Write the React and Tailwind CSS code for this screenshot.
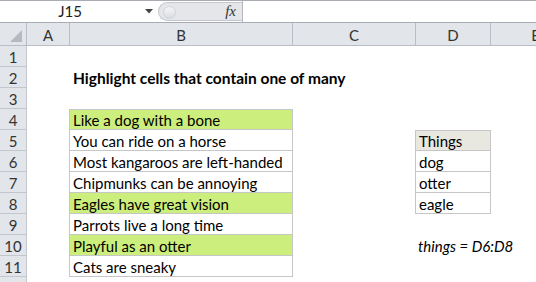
import React from 'react';

const cols = [43, 223, 123, 75, 90];
const letters = ['A', 'B', 'C', 'D', 'E'];

const rows = [
  { n: 1 },
  { n: 2, title: 'Highlight cells that contain one of many' },
  { n: 3 },
  { n: 4, b: 'Like a dog with a bone', green: true, first: true },
  { n: 5, b: 'You can ride on a horse', d: 'Things', dHead: true },
  { n: 6, b: 'Most kangaroos are left-handed', d: 'dog' },
  { n: 7, b: 'Chipmunks can be annoying', d: 'otter' },
  { n: 8, b: 'Eagles have great vision', green: true, d: 'eagle' },
  { n: 9, b: 'Parrots live a long time' },
  { n: 10, b: 'Playful as an otter', green: true, note: 'things = D6:D8' },
  { n: 11, b: 'Cats are sneaky' },
  { n: '' },
];

const FormulaBar = () => (
  <div className="flex h-[23px] border-t border-b border-[#a8acb2] bg-white">
    <div className="w-[140px] flex items-center justify-center text-[15px] text-[#222]">J15</div>
    <div className="w-[18px] flex items-center justify-center">
      <svg width="8" height="5" viewBox="0 0 8 5">
        <polygon points="0,0 8,0 4,4.5" fill="#444" />
      </svg>
    </div>
    <div className="w-[84px] relative flex items-center justify-end pr-[6px] bg-[#e4e6e9] border border-r-0 border-[#c4c8cd] rounded-l-[11px] my-[1px]">
      <div className="absolute left-[4px] top-[3px] w-[13px] h-[13px] rounded-full bg-gradient-to-b from-[#f4f5f6] to-[#dadde0] border border-[#d0d3d7]" />
      <span className="italic text-[15px] text-[#333]" style={{ fontFamily: '"Liberation Serif", serif' }}>
        fx
      </span>
    </div>
    <div className="w-px bg-[#b4b8be]" />
    <div className="flex-1 bg-white" />
  </div>
);

const HeaderRow = () => (
  <div className="flex h-[23px] bg-[#e2e5e9] border-b border-[#b9bec6] overflow-hidden">
    <div className="w-[27px] shrink-0 border-r border-[#b9bec6] flex items-end justify-end pr-[4px] pb-[3px]">
      <svg width="12" height="12" viewBox="0 0 12 12">
        <polygon points="12,0 12,12 0,12" fill="#b6bac0" />
      </svg>
    </div>
    {cols.map((w, i) => (
      <div
        key={letters[i]}
        style={{ width: w }}
        className="shrink-0 border-r border-[#b9bec6] flex items-center justify-center pt-[3px] text-[15px] text-[#333]"
      >
        {letters[i]}
      </div>
    ))}
  </div>
);

const Row = ({ r }) => {
  const bordered = !!r.b;
  return (
    <div className="flex h-[21px]">
      <div className="w-[27px] shrink-0 bg-[#e2e5e9] border-r border-b border-[#c3c7cd] flex items-center justify-center pt-[2px] text-[15px] text-[#333]">
        {r.n}
      </div>
      <div className="w-[43px] shrink-0" />
      <div className="w-[223px] shrink-0 relative">
        {r.title && (
          <div className="absolute left-[3px] top-0 h-[21px] flex items-center pt-[2px] whitespace-nowrap font-bold text-[15.5px] text-black">
            {r.title}
          </div>
        )}
        {bordered && (
          <div
            className={`h-full -ml-px flex items-center pt-[2px] pl-[3px] whitespace-nowrap text-[15px] text-black border-l border-r border-b border-[#c6c6c6] ${
              r.first ? 'border-t' : ''
            } ${r.green ? 'bg-[#ccee7c]' : 'bg-white'}`}
          >
            {r.b}
          </div>
        )}
      </div>
      <div className="w-[123px] shrink-0" />
      <div className="w-[75px] shrink-0 relative">
        {r.d && (
          <div
            className={`h-full -ml-px flex items-center pt-[2px] pl-[3px] text-[15px] text-black border-l border-r border-b border-[#c6c6c6] ${
              r.dHead ? 'border-t bg-[#e8e8e0]' : 'bg-white'
            }`}
          >
            {r.d}
          </div>
        )}
        {r.note && (
          <div className="absolute left-[2px] top-0 h-[21px] flex items-center pt-[2px] whitespace-nowrap italic text-[15px] text-black">
            {r.note}
          </div>
        )}
      </div>
      <div className="flex-1" />
    </div>
  );
};

export default function App() {
  return (
    <div className="w-[536px] h-[282px] overflow-hidden bg-white" style={{ fontFamily: 'Lato, "Liberation Sans", sans-serif' }}>
      <FormulaBar />
      <HeaderRow />
      {rows.map((r, i) => (
        <Row key={i} r={r} />
      ))}
    </div>
  );
}
